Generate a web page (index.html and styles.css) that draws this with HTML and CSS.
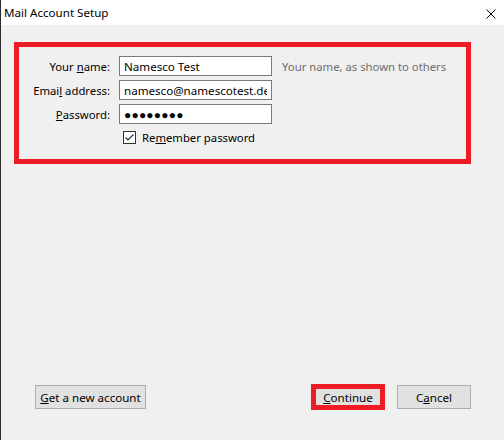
FILE: index.html
```html
<!DOCTYPE html>
<html>
<head>
    <title>Mail Account Setup</title>
    <link rel="stylesheet" href="styles.css">
</head>
<body>
    <div class="window">
        <div class="titlebar">
            <span class="title">Mail Account Setup</span>
            <svg class="close" width="10" height="10" viewBox="0 0 10 10">
                <path d="M0.5 0.5 L9.5 9.5 M9.5 0.5 L0.5 9.5" stroke="#000" stroke-width="1"/>
            </svg>
        </div>

        <div class="content">
            <div class="highlight">
                <div class="form">
                    <label class="label" for="name">Your <u>n</u>ame:</label>
                    <input id="name" class="field" type="text" value="Namesco Test">
                    <span class="hint">Your name, as shown to others</span>

                    <label class="label" for="email">Emai<u>l</u> address:</label>
                    <input id="email" class="field" type="text" value="namesco@namescotest.demo">
                    <span></span>

                    <label class="label" for="password"><u>P</u>assword:</label>
                    <input id="password" class="field password" type="text" value="&#9679;&#9679;&#9679;&#9679;&#9679;&#9679;&#9679;&#9679;">
                    <span></span>

                    <span></span>
                    <div class="remember">
                        <span class="checkbox">
                            <svg width="11" height="11" viewBox="0 0 11 11">
                                <path d="M1.5 5.5 L4 8 L9.5 2.5" stroke="#333" stroke-width="1.2" fill="none"/>
                            </svg>
                        </span>
                        <span>Re<u>m</u>ember password</span>
                    </div>
                    <span></span>
                </div>
            </div>

            <div class="actions">
                <button class="button wide"><u>G</u>et a new account</button>
                <div class="right-buttons">
                    <button class="button marked"><u>C</u>ontinue</button>
                    <button class="button">C<u>a</u>ncel</button>
                </div>
            </div>
        </div>
    </div>
</body>
</html>
```

FILE: styles.css
```css
body {
    margin: 0;
    font-family: "Noto Sans", "Open Sans", sans-serif;
    font-size: 11.3px;
    color: #000;
    background-color: #f0f0f0;
}
.window {
    width: 504px;
    height: 440px;
    box-sizing: border-box;
    border-left: 1px solid #2b2b2b;
    display: flex;
    flex-direction: column;
}
.titlebar {
    height: 25px;
    background-color: white;
    display: flex;
    align-items: center;
    justify-content: space-between;
    padding: 0 8px 0 3px;
}
.title {
    font-size: 11.6px;
    padding-bottom: 1px;
}
.close {
    margin-top: 2px;
}
.content {
    flex: 1;
    display: flex;
    flex-direction: column;
    padding: 17px 33px 30px 13px;
}
.highlight {
    border: 5px solid #ed1c24;
    padding: 9px 0 14px 0;
}
.form {
    display: grid;
    grid-template-columns: 91px 153px auto;
    column-gap: 9px;
    row-gap: 4px;
    align-items: center;
}
.label {
    text-align: right;
}
.field {
    height: 20px;
    box-sizing: border-box;
    border: 1px solid #7a7a7a;
    background-color: white;
    font-family: "Noto Sans", "Open Sans", sans-serif;
    font-size: 11.6px;
    padding: 0 4px;
    margin: 0;
    outline: none;
}
.password {
    font-size: 12px;
    letter-spacing: 0.2px;
}
.hint {
    color: #6d6d6d;
    padding-left: 1px;
}
.remember {
    display: flex;
    align-items: center;
    gap: 6px;
    margin-top: 2px;
    padding-left: 4px;
}
.checkbox {
    width: 13px;
    height: 13px;
    box-sizing: border-box;
    border: 1px solid #333;
    background-color: white;
    display: flex;
    align-items: center;
    justify-content: center;
}
.actions {
    margin-top: auto;
    display: flex;
    justify-content: space-between;
    align-items: center;
    padding-left: 21px;
}
.right-buttons {
    display: flex;
    align-items: center;
    gap: 12px;
}
.button {
    height: 24px;
    width: 74px;
    box-sizing: border-box;
    border: 1px solid #adadad;
    background-color: #e1e1e1;
    font-family: "Noto Sans", "Open Sans", sans-serif;
    font-size: 11.6px;
    color: #000;
    padding: 0;
}
.button.wide {
    width: 111px;
}
.button.marked {
    height: 26px;
    border: 5px solid #ed1c24;
}
```
